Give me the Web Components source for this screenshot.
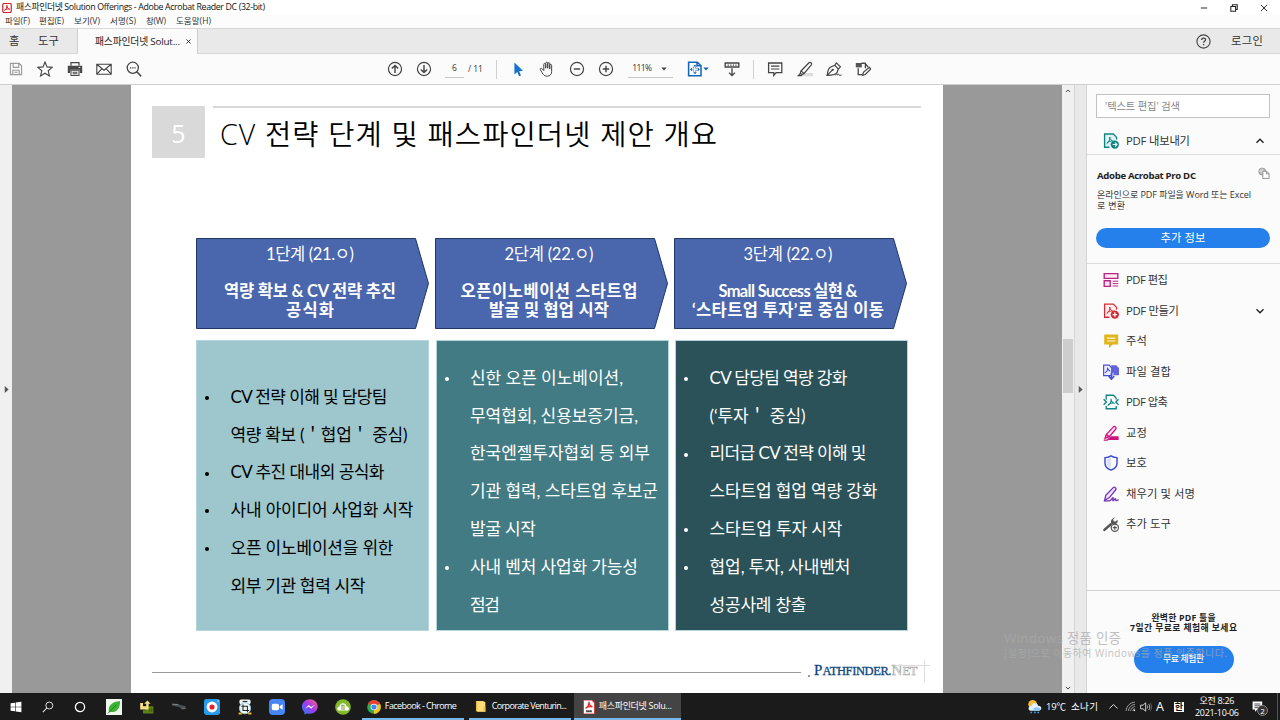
<!DOCTYPE html>
<html lang="ko">
<head>
<meta charset="utf-8">
<title>Adobe Acrobat Reader DC</title>
<style>
  html, body {
    margin: 0;
    width: 1280px;
    height: 720px;
    overflow: hidden;
    background: #fff;
    font-family: "Open Sans", "Noto Sans CJK KR", sans-serif;
  }
</style>
</head>
<body>
<reader-app></reader-app>

<script>
const ICONS = {
  acrobat: `<rect x="1.5" y=".8" width="17" height="18.4" rx="3" fill="#fff" stroke="#d3222a" stroke-width="2.4"/><path d="M5 15c3-1.500 5.300-6.500 5-10.500M9.800 5c.2 3.500 2 6.500 5.700 7.500M5 14c3-2 7-2.500 10.500-1.600" fill="none" stroke="#d3222a" stroke-width="2"/>`,
  save: `<path d="M3 3h11l3 3v11H3zM6.500 3v5h7V3M6 17v-5.500h8V17M8 14h4" fill="none" stroke="#9a9a9a" stroke-width="1.400"/>`,
  star: `<path d="M10 1.300l2.500 6.100 6.500.5-5 4.300 1.600 6.500-5.600-3.500-5.600 3.500L6 12.200 1 7.900l6.500-.5z" fill="none" stroke="#444" stroke-width="1.400"/>`,
  print: `<path d="M5 6V2h10v4" fill="none" stroke="#444" stroke-width="1.500"/><path d="M1 6h18v9h-3v-4H4v4H1z" fill="#484848"/><path d="M5 11.500h10V18H5zM7 14h6M7 16h6" fill="none" stroke="#484848" stroke-width="1.300"/><path d="M14.500 8h2" stroke="#fff" stroke-width="1.200"/>`,
  mail: `<path d="M1 4h18v12.500H1zM1 4l9 7.500L19 4M1 16.500l6.500-7M19 16.500l-6.500-7" fill="none" stroke="#444" stroke-width="1.400"/>`,
  search: `<circle cx="8.500" cy="8.500" r="7" fill="none" stroke="#444" stroke-width="1.600"/><path d="M13.500 13.500l5.500 5.500" stroke="#444" stroke-width="2"/><path d="M5 8.500h1.600M7.700 8.500h1.600M10.400 8.500H12" stroke="#444" stroke-width="1.500"/>`,
  up: `<circle cx="10" cy="10" r="8.200" fill="none" stroke="#444" stroke-width="1.500"/><path d="M10 15V5.500M6 9.500l4-4 4 4" fill="none" stroke="#444" stroke-width="1.800"/>`,
  down: `<circle cx="10" cy="10" r="8.200" fill="none" stroke="#444" stroke-width="1.500"/><path d="M10 5v9.500M6 10.500l4 4 4-4" fill="none" stroke="#444" stroke-width="1.800"/>`,
  cursor: `<path d="M5.500 2v15l3.600-3.300 2.200 5.300 2.400-1-2.200-5.200 4.700-.6z" fill="#1473c8"/>`,
  hand: `<path d="M6 12V4.500c0-2 2.400-2 2.400 0V9 3c0-2 2.500-2 2.500 0v6-5.500c0-2 2.500-2 2.500 0V10 5.500c0-1.800 2.400-1.800 2.400 0V13c0 3.500-2 6-5.500 6-3.300 0-5-1.500-6.300-4.300L1.700 11c-.8-1.700 1.200-2.500 2.200-1.200L6 12" fill="none" stroke="#444" stroke-width="1.250"/>`,
  minus: `<circle cx="10" cy="10" r="8.200" fill="none" stroke="#444" stroke-width="1.500"/><path d="M6 10h8" stroke="#444" stroke-width="1.800"/>`,
  plus: `<circle cx="10" cy="10" r="8.200" fill="none" stroke="#444" stroke-width="1.500"/><path d="M6 10h8M10 6v8" stroke="#444" stroke-width="1.800"/>`,
  fit: `<path d="M2 1.500h11l4.500 4.500v12.500H2zM12.500 1.500V6h5" fill="none" stroke="#1465b8" stroke-width="1.900"/><path d="M10 4.500l2.300 2.500H7.700zM10 16.500l2.300-2.500H7.700zM3.800 10.500l2.500-2.300v4.600zM16 10.500l-2.500-2.300v4.600z" fill="#1465b8"/><path d="M7.500 8.500h5v4h-5z" fill="none" stroke="#1465b8" stroke-dasharray="1.500 1"/>`,
  scroll: `<path d="M1.500 2.500h17v5h-17z" fill="none" stroke="#444" stroke-width="1.700"/><path d="M4.500 5.200h1.500M7.800 5.200h1.500M11 5.200h1.500M14.200 5.200h1.500" stroke="#444" stroke-width="1.500"/><path d="M10 9v9M6.300 14.500L10 18.300l3.700-3.800" fill="none" stroke="#444" stroke-width="1.700"/>`,
  comment: `<path d="M2 2.500h16.500v12h-7l-3 3.500v-3.500H2z" fill="none" stroke="#444" stroke-width="1.600"/><path d="M5 6.500h10.500M5 10h10.500" stroke="#444" stroke-width="1.500"/>`,
  highlight: `<path d="M9 15h11v4H6z" fill="#ddd"/><path d="M5 12.500L15 2.200c1.500-1.500 4.200.8 2.900 2.500L9 15.500zM5 12.500l-1 3 2 1.500 3-1.500M4.500 15.500L1.500 18.300h4l1-1.500" fill="none" stroke="#444" stroke-width="1.500"/>`,
  pen: `<path d="M1.500 18c.3-5 1.500-8.500 4-10.200L11 5.300l4.500 4.800-2 4.800c-1.600 2-5.500 3-12 3.100L8 11.200M11 5.300l2-3 5 5-2.500 2.800" fill="none" stroke="#444" stroke-width="1.500"/><circle cx="8.500" cy="11" r="1.400" fill="#444"/><path d="M12 18c2-3 2.500-2 2.500-.5 1.500-1.500 2-1 2.200.5l2.800-.5" fill="none" stroke="#444" stroke-width="1.200"/>`,
  editdoc: `<path d="M8 3h5v6M4 9v8h5" fill="none" stroke="#444" stroke-width="1.600"/><path d="M1 2.500h7.500v5.500H1z" fill="#555"/><path d="M8 3h4.500l4 4.500" fill="none" stroke="#444" stroke-width="1.600"/><path d="M9.500 18l1-3.800 7.300-6.400 2 2.200-7 6.800z" fill="#fff" stroke="#444" stroke-width="1.500"/>`,
  help: `<circle cx="10" cy="10" r="8.800" fill="none" stroke="#444" stroke-width="1.500"/><path d="M7.500 8c0-3.300 5.200-3.300 5.200-.3 0 2-2.600 2-2.600 4.100M10.100 13.300v1.800" fill="none" stroke="#444" stroke-width="1.800"/>`,
  export: `<path d="M17 8V5.500L13 1.300H2v16.500h6" fill="#dff3f2" stroke="#108684" stroke-width="1.700"/><path d="M4.500 13.500c2.500-1.500 4.500-5 4-8.500.2 3 2 5 5 5.500M5 12c2-1.500 4.500-2 7-2" fill="none" stroke="#108684" stroke-width="1.200"/><circle cx="14.800" cy="14.500" r="5.200" fill="#108684"/><path d="M12 14.500h5M15 12l2.500 2.500L15 17" fill="none" stroke="#fff" stroke-width="1.300"/>`,
  edit: `<path d="M1.500 2h17v6h-17zM1.500 11h7.500v7H1.500z" fill="#fbeaf4" stroke="#bb2083" stroke-width="1.700"/><path d="M12 11.500h7M12 14.500h7M12 17.500h7" stroke="#bb2083" stroke-width="1.200"/>`,
  create: `<path d="M17 8V5.500L13 1.300H2v16.500h6" fill="#fff0ef" stroke="#d22d35" stroke-width="1.600"/><path d="M4.500 13.500c2.500-1.500 4.500-5 4-8.500.2 3 2 5 5 5.500M5 12c2-1.500 4.500-2 7-2" fill="none" stroke="#d22d35" stroke-width="1.200"/><circle cx="14.800" cy="14.500" r="5.200" fill="#d22d35"/><path d="M12 14.500h5.600M14.800 11.700v5.600" stroke="#fff" stroke-width="1.500"/>`,
  note: `<path d="M1.500 2h17.500v12.500H12L7.500 19v-4.500h-6z" fill="#dfb51f"/><path d="M5 6.500h10.500M5 10h10.500" stroke="#fff5cc" stroke-width="1.500"/>`,
  combine: `<path d="M10.500 1.500h6L20 5v9h-7v-3H10z" fill="#6164dc"/><path d="M.8 1.500h7L11 5v9.500H.8z" fill="#eef" stroke="#4a4ed1" stroke-width="1.500"/><path d="M2.500 11c2-1 3.500-4 3-6.500.3 2 1.500 3.500 3.500 4.500" fill="none" stroke="#4a4ed1" stroke-width="1.300"/><path d="M10.500 11v7M7 15l3.500 4 3.500-4" fill="none" stroke="#4a4ed1" stroke-width="2"/>`,
  compress: `<path d="M4 5V1.500h9L16.500 5M4 15v3.500h12.500V15M4 5l-.1 2M16.500 5v2" fill="none" stroke="#108684" stroke-width="1.700"/><path d="M.8 6.500L4.300 10 .8 13.500M19.400 6.500L16 10l3.400 3.500" fill="none" stroke="#108684" stroke-width="1.700"/><path d="M6 14.500c2.500-1.500 4.500-5 4-8.500.2 3 2 5 4.500 6M6 13.500c2-1.500 5-2.500 8-2" fill="none" stroke="#108684" stroke-width="1.300"/>`,
  redact: `<path d="M4 12L13 2.300c1.600-1.500 4.500.8 3 2.700L8 14.500l-5.500 2zM4 12l4 2.500" fill="#fae4f1" stroke="#d0127d" stroke-width="1.600"/><path d="M1 18.800h4.500l3-2.800" fill="none" stroke="#d0127d" stroke-width="1.500"/><path d="M8 16.300l2-2.300h9.500v4.700H7z" fill="#d0127d"/>`,
  shield: `<path d="M10 1c2.500 1.500 5 2.200 7.500 2.300v7c0 4-3 7-7.500 8.700-4.500-1.700-7.500-4.700-7.500-8.700v-7C5 3.200 7.500 2.500 10 1z" fill="#fff" stroke="#3b4bd0" stroke-width="1.800"/><path d="M10 3v14c-3.500-1.500-5.600-3.500-5.600-7V5C6.500 4.800 8.500 4 10 3z" fill="#dce0ff"/>`,
  sign: `<path d="M3.500 11.500L12.800 2c1.700-1.500 4.400.8 3.100 2.700L8 14.500l-6 3.300zM1 18.700h6.500c3 0 4-4.500 5-4.200 1 .2-1 4 .2 4s2-3 2.800-2.800c.8.2-.3 2.500.8 2.700 1 0 1-1.300 3.200-1" fill="#efe4ff" stroke="#7132b8" stroke-width="1.600"/>`,
  tools: `<path d="M1.800 17.300l8-7" stroke="#555" stroke-width="3.200" stroke-linecap="round"/><path d="M15.500 1.500L12.800 4l.5 2.500 2.700.5 2.200-2.200c1 3.700-1.700 6.200-5 5.700C8.500 10 8.500 3.500 15.500 1.500z" fill="#555"/><circle cx="14.800" cy="14.600" r="4.500" fill="#fbfbfb" stroke="#555" stroke-width="1.500"/><path d="M12.300 14.600h5M14.800 12.100v5" stroke="#555" stroke-width="1.500"/>`,
  copy: `<circle cx="7" cy="7.500" r="5.800" fill="#bbb" stroke="#777"/><path d="M1.500 7h10M7 2v10M3 4l8 7" stroke="#eee"/><path d="M8 7h6l4.500 4v8H8zM14 7v4.500h4.500" fill="#fff" stroke="#777" stroke-width="1.300"/>`,
  chevup: `<path d="M3 13.500l7-7 7 7" fill="none" stroke="#222" stroke-width="2.800"/>`,
  chevdown: `<path d="M3 6.500l7 7 7-7" fill="none" stroke="#222" stroke-width="2.800"/>`,
  trayup: `<path d="M1 14.500l9-9 9 9" fill="none" stroke="#eee" stroke-width="2"/>`,
  caret: `<path d="M1 5h18l-9 10z" fill="#444"/>`,
  caretblue: `<path d="M1 5h18l-9 10z" fill="#1465b8"/>`,
  tri: `<path d="M5 0l11 10L5 20z" fill="#555"/>`,
  min: `<path d="M2 10h16" stroke="#222" stroke-width="2.400"/>`,
  restore: `<path d="M2 6h12v12H2zM6 6V2h12v12h-4" fill="none" stroke="#222" stroke-width="2.600"/>`,
  close: `<path d="M2 2l16 16M18 2L2 18" stroke="#222" stroke-width="2.400"/>`,
  closebold: `<path d="M2 2l16 16M18 2L2 18" stroke="#333" stroke-width="4"/>`,
  windows: `<path d="M1 3.800l7.600-1v6.700H1zM9.600 2.600L19 1.300v8.200H9.600zM1 10.500h7.600v6.700l-7.600-1zM9.600 10.500H19v8.200l-9.400-1.300z" fill="#fff"/>`,
  find: `<circle cx="12.200" cy="7.500" r="5.800" fill="none" stroke="#eee" stroke-width="1.500"/><path d="M8 11.700L1.500 18.500" stroke="#eee" stroke-width="1.700"/>`,
  cortana: `<circle cx="10" cy="10" r="7.700" fill="none" stroke="#fff" stroke-width="2.200"/>`,
  leaf: `<path d="M0 0h20v20H0z" fill="#f1f6ee"/><path d="M3.500 16C2.500 7.500 8 3.500 17.500 2.500 18 12 13 18 4.500 16z" fill="#3bb334"/><path d="M2.500 18L13 7" stroke="#237b24" stroke-width="1.200"/>`,
  blocks: `<path d="M8 9h10v9H5v-4h3z" fill="#5d8017"/><path d="M1.500 5h3.500v4h4V6H6.500l4-4 4 4H12v7H1.500z" fill="#f5e083"/><path d="M13.500 12v4M16 12v4" stroke="#2f4607"/>`,
  drone: `<path d="M1 6l9 1 8 2 1 3-4 1-5-3-9-2z" fill="#4b5054"/><path d="M2 6.500l7 .4" stroke="#96999b"/><path d="M13 12h5" stroke="#777"/>`,
  record: `<rect width="20" height="20" rx="3" fill="#299bec"/><circle cx="10" cy="10" r="6.800" fill="#fff"/><circle cx="10" cy="10" r="3.200" fill="#e71d31"/><path d="M17 2.500h1.500" stroke="#fff" stroke-width="1.300"/>`,
  capture: `<rect x="3" y=".5" width="14" height="6" rx="2" fill="#f6f6f6"/><path d="M7 3h6" stroke="#222" stroke-width="1.300"/><circle cx="10" cy="11.500" r="7" fill="#f4fafc" stroke="#8cc4dd" stroke-width="1.200"/><path d="M7.500 7v7.500H15M5.500 9h7.500v7.500" fill="none" stroke="#222" stroke-width="1.300"/><path d="M2 17h4v2.500H2zM14 17h4v2.500h-4z" fill="#efb71b"/>`,
  zoom: `<rect width="20" height="20" rx="5" fill="#4685f3"/><rect x="3.500" y="6" width="9" height="8" rx="2" fill="#fff"/><path d="M13.300 9l3.700-2.500v7L13.300 11z" fill="#fff"/>`,
  messenger: `<defs><linearGradient id="m" x1="0" y1="1" x2="1" y2="0"><stop offset="0" stop-color="#1689ff"/><stop offset=".5" stop-color="#9f38f3"/><stop offset="1" stop-color="#ff6372"/></linearGradient></defs><path d="M10 .3c13 .5 12.700 18.500-.5 18L6 18l-3 1.500v-3.300C-3.500 10 1 .3 10 .3z" fill="url(#m)"/><path d="M4 12l4.500-4.500 3 2.500 4.500-2.700-4.500 5-3-2.500z" fill="#fff"/>`,
  green: `<circle cx="10" cy="10" r="9.800" fill="#82b928"/><path d="M5.500 14.500c-4.500-.5-2.500-5.500 0-5.200 1-5.200 8-5.200 9 0 3.300-.3 4.500 5 0 5.200z" fill="#fff"/><path d="M7.500 12.500h5M7.500 10h5M7.500 7.800h4.500" stroke="#669820" stroke-width="1.200"/>`,
  chrome: `<circle cx="10" cy="10" r="9.700" fill="#32a852"/><path d="M10 10L1.700 5A9.700 9.700 0 0118.500 5.300L10 10z" fill="#e84234"/><path d="M10 10l8.600-4.700c3.100 6-.4 13.900-8.700 14.400z" fill="#fbc116"/><path d="M1.700 5c2-3.300 5.400-4.700 8.300-4.700 4 0 7 2 8.500 5H10z" fill="#e84234"/><circle cx="10" cy="10" r="4.700" fill="#fff"/><circle cx="10" cy="10" r="3.700" fill="#4285f4"/>`,
  folder: `<path d="M3 1.500h11v16H3z" fill="#e9b83e"/><path d="M5 2h10l2.500 2v14H5z" fill="#ffdb7a"/><path d="M14.500 10h3v8h-3z" fill="#f1c24c"/>`,
  pdf: `<path d="M2 0h12l4 4v16H2z" fill="#fff" stroke="#d63839" stroke-width="1.500"/><path d="M5 12c3-1.500 5-5.500 5-9.500 0 4 2 6.500 5 7.200M6 11c2-1 5-1.800 8.500-1.400" fill="none" stroke="#e02626" stroke-width="1.900"/><path d="M6 16h8" stroke="#222" stroke-width="3" stroke-dasharray="2.200 .6"/>`,
  weather: `<circle cx="7.500" cy="7" r="5.800" fill="#f6bd38"/><path d="M5 15.500C.5 15 1.500 9 6 9.500 7 4 14 4 14.800 9c5.500 0 5.500 6 1.200 6.500z" fill="#dff0fb"/><path d="M6 17l-1 2M11 17l-1 2M15.500 17l-1 2" stroke="#4aa2ea" stroke-width="2"/><path d="M8 15.500c0-5 8-6 10-1.500-.5 1-1 1.400-2 1.500z" fill="#8bc8f2"/>`,
  wifi: `<path d="M2 18C3 9 9 3 18 2M6 18c1-6 5-10.500 12-12M10 18c1-4 4-7 8-8M14 18c.5-2 2-3.500 4-4" fill="none" stroke="#bbb" stroke-width="1.500"/><circle cx="17" cy="17" r="1.500" fill="#fff"/>`,
  sound: `<path d="M1 7h4l4.500-4v14L5 13H1z" fill="none" stroke="#eee" stroke-width="1.400"/><path d="M12 7.500c1 1.500 1 3.500 0 5M14.500 5c2.300 3 2.300 7 0 10" fill="none" stroke="#ddd" stroke-width="1.300"/><path d="M17 3c3 4 3 10 0 14" fill="none" stroke="#777" stroke-width="1.200"/>`,
  notice: `<path d="M1 1h16v13H9l-4 4v-4H1z" fill="#fff"/><path d="M4 5h10M4 8h10M4 11h6" stroke="#222" stroke-width="1.300"/>`
};

// base class: every component fills its shadow root from a string once
class Base extends HTMLElement {
  constructor() {
    super();
    this.shadow = this.attachShadow({ mode: 'open' });
  }

  connectedCallback() {
    this.shadow.innerHTML = this.render();
    this.ready();
  }

  ready() {}
}

class AppIcon extends Base {
  render() {
    const size = this.getAttribute('size') || 16;
    return /*html*/`
      <style>
        :host { display: block; flex: none; width: ${size}px; height: ${size}px; }
        svg { display: block; }
      </style>
      <svg width="${size}" height="${size}" viewBox="0 0 20 20">${ICONS[this.getAttribute('name')]}</svg>
    `;
  }
}

// one line of text, tracked so that it takes exactly the given width
class FitText extends Base {
  render() {
    return /*html*/`
      <style>
        :host { display: block; flex: none; width: ${this.getAttribute('w')}px; white-space: nowrap; line-height: 1.2; }
        span { display: block; width: max-content; }
      </style>
      <span><slot></slot></span>
    `;
  }

  ready() {
    const span = this.shadow.querySelector('span');
    const w = Number(this.getAttribute('w'));
    const count = [...this.textContent].length;
    if (count < 2) return;
    span.style.letterSpacing = (w - span.getBoundingClientRect().width) / (count - 1) + 'px';
  }
}

class TitleBar extends Base {
  render() {
    return /*html*/`
      <style>
        :host { display: block; background: #fff; color: #111; }
        .row { display: flex; align-items: center; }
        .title { height: 15px; padding: 0 12px 0 2px; font-size: 8.8px; }
        .title fit-text { margin-left: 4px; }
        .buttons { display: flex; gap: 22px; margin-left: auto; }
        .menu { height: 13px; padding-left: 5px; font-size: 8.5px; background: #fcfcfc; color: #333; }
      </style>
      <div class="row title">
        <app-icon name="acrobat" size="10"></app-icon>
        <fit-text w="249">패스파인더넷 Solution Offerings - Adobe Acrobat Reader DC (32-bit)</fit-text>
        <div class="buttons">
          <app-icon name="min" size="8"></app-icon>
          <app-icon name="restore" size="8"></app-icon>
          <app-icon name="close" size="8"></app-icon>
        </div>
      </div>
      <div class="row menu">
        <fit-text w="25">파일(F)</fit-text>
        <fit-text w="25" style="margin-left:9px">편집(E)</fit-text>
        <fit-text w="26" style="margin-left:10px">보기(V)</fit-text>
        <fit-text w="26" style="margin-left:10px">서명(S)</fit-text>
        <fit-text w="20" style="margin-left:10px">창(W)</fit-text>
        <fit-text w="35" style="margin-left:10px">도움말(H)</fit-text>
      </div>
    `;
  }
}

class TabBar extends Base {
  render() {
    return /*html*/`
      <style>
        :host { display: flex; box-sizing: border-box; height: 26px; align-items: stretch; background: #e9e9e9; border-top: 1px solid #d8d8d8; border-bottom: 1px solid #d8d8d8; color: #333; font-size: 11.3px; }
        .item { display: flex; align-items: center; }
        .home { padding-left: 9px; width: 68px; gap: 19px; }
        .active { box-sizing: border-box; width: 121px; margin-bottom: -1px; padding-left: 17px; gap: 6px; background: #fbfbfb; border: solid #d0d0d0; border-width: 0 1px; font-size: 9.8px; color: #222; }
        .right { margin-left: auto; padding-right: 17px; gap: 20px; }
      </style>
      <div class="item home"><fit-text w="10">홈</fit-text><fit-text w="21">도구</fit-text></div>
      <div class="item active">
        <fit-text w="85">패스파인더넷 Solut...</fit-text>
        <app-icon name="closebold" size="5"></app-icon>
      </div>
      <div class="item right"><app-icon name="help" size="15"></app-icon><fit-text w="32">로그인</fit-text></div>
    `;
  }
}

class ToolBar extends Base {
  render() {
    return /*html*/`
      <style>
        :host { display: flex; box-sizing: border-box; height: 31px; align-items: center; background: #fbfbfb; border-bottom: 1px solid #cfcfcf; padding-left: 8px; font-size: 8.5px; color: #333; }
        .group { display: flex; align-items: center; gap: 13.400px; }
        .nav { margin-left: 245px; }
        .box { display: flex; box-sizing: border-box; height: 18px; align-items: center; border-bottom: 1px solid #c6c6c6; }
        .page { width: 19px; margin-left: 13px; padding-left: 7px; }
        .zoom { width: 45px; margin-left: 14px; padding-left: 4px; gap: 9px; }
        i { width: 1px; height: 19px; background: #d0d0d0; margin: 0 13px; }
      </style>
      <div class="group">
        <app-icon name="save"></app-icon><app-icon name="star"></app-icon><app-icon name="print"></app-icon>
        <app-icon name="mail"></app-icon><app-icon name="search"></app-icon>
      </div>
      <div class="group nav"><app-icon name="up"></app-icon><app-icon name="down"></app-icon></div>
      <div class="box page"><fit-text w="5">6</fit-text></div>
      <fit-text w="15" style="margin-left:4px">/ 11</fit-text>
      <i></i>
      <div class="group">
        <app-icon name="cursor"></app-icon><app-icon name="hand"></app-icon>
        <app-icon name="minus"></app-icon><app-icon name="plus"></app-icon>
      </div>
      <div class="box zoom"><fit-text w="20">111%</fit-text><app-icon name="caret" size="6"></app-icon></div>
      <app-icon name="fit" style="margin-left:14px"></app-icon>
      <app-icon name="caretblue" size="6"></app-icon>
      <app-icon name="scroll" style="margin-left:15px"></app-icon>
      <i></i>
      <div class="group">
        <app-icon name="comment"></app-icon><app-icon name="highlight"></app-icon>
        <app-icon name="pen"></app-icon><app-icon name="editdoc"></app-icon>
      </div>
    `;
  }
}

class StageArrow extends Base {
  render() {
    return /*html*/`
      <style>
        :host { display: grid; width: 233px; height: 91px; color: #fff; font-size: 16.5px; }
        svg, .text { grid-area: 1 / 1; }
        .text { display: flex; flex-direction: column; align-items: center; padding: 7px 5px 0 0; }
        ::slotted(fit-text) { height: 19px; line-height: 19px !important; }
        ::slotted(fit-text:first-child) { margin-bottom: 18px; }
        ::slotted(fit-text:not(:first-child)) { font-weight: 700; }
      </style>
      <svg width="233" height="91"><path d="M.5.500H219.500L232.500 45.500 219.500 90.500H.5z" fill="#4a66ac" stroke="#1f3864"/></svg>
      <div class="text"><slot></slot></div>
    `;
  }
}

class StageCard extends Base {
  render() {
    return /*html*/`
      <style>
        :host { display: flex; box-sizing: border-box; flex-direction: column; justify-content: center; width: 233px; height: 291px; padding: 12px 0 0 8px; border: 1.5px solid #b4d5d9; font-size: 17px; }
        ::slotted(card-line) { height: 37.85px; }
      </style>
      <slot></slot>
    `;
  }
}

class CardLine extends Base {
  render() {
    return /*html*/`
      <style>
        :host { display: flex; align-items: center; }
        .dot { width: 4px; height: 4px; margin: 2px 21.500px 0 0; border-radius: 50%; background: ${this.hasAttribute('dot') ? 'currentColor' : 'none'}; }
      </style>
      <div class="dot"></div>
      <fit-text w="${this.getAttribute('w')}">${this.textContent}</fit-text>
    `;
  }
}

class SlidePage extends Base {
  render() {
    return /*html*/`
      <style>
        :host { display: block; box-sizing: border-box; width: 812px; height: 608px; padding: 21px 22px 0 21px; background: #fff; font-family: Lato, "Noto Sans CJK KR", sans-serif; }
        .head { display: flex; gap: 8px; height: 52px; }
        .num { display: flex; width: 53px; align-items: center; justify-content: center; padding-top: 2px; box-sizing: border-box; background: #d9d9d9; color: #fff; font: 400 25px "Open Sans"; }
        .name { flex: 1; border-top: 2px solid #d9d9d9; padding: 9px 0 0 7px; font: 350 28.5px "Open Sans", "Noto Sans CJK KR"; color: #000; }
        .row { display: flex; gap: 6px; margin-left: 44px; }
        .arrows { margin-top: 80px; }
        .cards { gap: 6.500px; margin-top: 11px; }
        .foot { display: flex; align-items: center; height: 24px; margin-top: 29px; }
        .foot hr { flex: none; width: 649px; height: 1px; margin: 1px 0 0; border: 0; background: #999; }
        .foot b { flex: none; width: 2px; height: 2px; margin: 8px 4px 0 7px; background: #999; }
        .logo { display: flex; align-items: baseline; margin-top: -5px; font: 15px/1 "Liberation Serif"; color: #0d4780; }
        .logo fit-text { -webkit-text-stroke: .3px currentColor; }
        .small { font-size: 12.5px; }
        .logo .net { color: #fff; -webkit-text-stroke: .6px #aaa; }
        .cross { flex: none; align-self: flex-start; margin-left: -22px; }
      </style>
      <div class="head">
        <div class="num">5</div>
        <div class="name"><fit-text w="497">CV 전략 단계 및 패스파인더넷 제안 개요</fit-text></div>
      </div>
      <div class="row arrows">
        <stage-arrow><fit-text w="88">1단계 (21.ㅇ)</fit-text><fit-text w="172">역량 확보 &amp; CV 전략 추진</fit-text><fit-text w="48">공식화</fit-text></stage-arrow>
        <stage-arrow><fit-text w="89">2단계 (22.ㅇ)</fit-text><fit-text w="177">오픈이노베이션 스타트업</fit-text><fit-text w="120">발굴 및 협업 시작</fit-text></stage-arrow>
        <stage-arrow><fit-text w="89">3단계 (22.ㅇ)</fit-text><fit-text w="139">Small Success 실현 &amp;</fit-text><fit-text w="192">‘스타트업 투자’로 중심 이동</fit-text></stage-arrow>
      </div>
      <div class="row cards">
        <stage-card style="background:#9dc6cd;color:#000">
          <card-line dot w="157">CV 전략 이해 및 담당팀</card-line>
          <card-line w="177">역량 확보 (＇협업＇ 중심)</card-line>
          <card-line dot w="154">CV 추진 대내외 공식화</card-line>
          <card-line dot w="183">사내 아이디어 사업화 시작</card-line>
          <card-line dot w="163">오픈 이노베이션을 위한</card-line>
          <card-line w="135">외부 기관 협력 시작</card-line>
        </stage-card>
        <stage-card style="background:#427b84;color:#fff">
          <card-line dot w="153">신한 오픈 이노베이션,</card-line>
          <card-line w="168">무역협회, 신용보증기금,</card-line>
          <card-line w="180">한국엔젤투자협회 등 외부</card-line>
          <card-line w="188">기관 협력, 스타트업 후보군</card-line>
          <card-line w="66">발굴 시작</card-line>
          <card-line dot w="168">사내 벤처 사업화 가능성</card-line>
          <card-line w="30">점검</card-line>
        </stage-card>
        <stage-card style="background:#2b5259;color:#fff">
          <card-line dot w="138">CV 담당팀 역량 강화</card-line>
          <card-line w="96">(‘투자＇ 중심)</card-line>
          <card-line dot w="157">리더급 CV 전략 이해 및</card-line>
          <card-line w="168">스타트업 협업 역량 강화</card-line>
          <card-line dot w="133">스타트업 투자 시작</card-line>
          <card-line dot w="141">협업, 투자, 사내벤처</card-line>
          <card-line w="97">성공사례 창출</card-line>
        </stage-card>
      </div>
      <div class="foot">
        <hr><b></b>
        <div class="logo"><fit-text w="8.5">P</fit-text><fit-text class="small" w="69">ATHFINDER.</fit-text><fit-text class="net" w="11">N</fit-text><fit-text class="net small" w="15">ET</fit-text></div>
        <svg class="cross" width="34" height="24"><path d="M0 5.500h34M28.500 0v22" stroke="#ddd"/></svg>
      </div>
    `;
  }
}

class DocView extends Base {
  render() {
    return /*html*/`
      <style>
        :host { display: flex; width: 1086px; background: #999; }
        .left { display: flex; width: 12px; align-items: center; justify-content: center; background: #f0f0f0; }
        .mid { display: flex; flex: 1; justify-content: center; }
        .bar { display: flex; box-sizing: border-box; width: 12px; flex-direction: column; align-items: center; justify-content: space-between; padding: 3px 0 2px; background: #f0f0f0; }
        .thumb { width: 10px; height: 54px; transform: translateY(-24px); background: #cdcdcd; }
        .strip { display: flex; box-sizing: border-box; width: 12px; align-items: center; justify-content: center; background: #e9e9e9; border-left: 1px solid #d5d5d5; }
      </style>
      <div class="left"><app-icon name="tri" size="7"></app-icon></div>
      <div class="mid"><slide-page></slide-page></div>
      <div class="bar">
        <app-icon name="chevup" size="6"></app-icon>
        <div class="thumb"></div>
        <app-icon name="chevdown" size="6"></app-icon>
      </div>
      <div class="strip"><app-icon name="tri" size="7"></app-icon></div>
    `;
  }
}

class ToolRow extends Base {
  render() {
    const open = this.getAttribute('open');
    return /*html*/`
      <style>
        :host { display: flex; height: 30.5px; align-items: center; padding: 0 15px 0 16px; font-size: 11.3px; color: #333; }
        fit-text { margin-left: 7px; }
        .chev { margin-left: auto; }
      </style>
      <app-icon name="${this.getAttribute('icon')}"></app-icon>
      <fit-text w="${this.getAttribute('w')}">${this.textContent}</fit-text>
      ${open ? `<app-icon class="chev" name="chev${open}" size="10"></app-icon>` : ''}
    `;
  }
}

class SidePanel extends Base {
  render() {
    return /*html*/`
      <style>
        :host { display: flex; box-sizing: border-box; flex-direction: column; width: 194px; background: #fbfbfb; border-left: 1px solid #d3d3d3; color: #333; }
        .search { display: flex; box-sizing: border-box; height: 24px; margin: 9px 10px 0 9px; padding-left: 8px; align-items: center; border: 1px solid #c2c2c2; background: #fff; color: #888; font-size: 10.3px; }
        .export { height: 36px; border-bottom: 1px solid #ddd; }
        .export tool-row { padding-top: 8px; }
        .promo { display: flex; box-sizing: border-box; flex-direction: column; height: 109px; padding: 14px 10px 0 9px; border-bottom: 1px solid #ddd; font-size: 9px; }
        .top { display: flex; align-items: flex-start; justify-content: space-between; height: 20px; font-size: 9.6px; font-weight: 700; color: #222; }
        .top fit-text { margin: 1px 0 0 1px; }
        .promo > fit-text { height: 11px; line-height: 11px; margin-left: 1px; }
        .btn { display: flex; align-items: center; justify-content: center; border-radius: 14px; background: #2680eb; color: #fff; }
        .more { height: 20px; margin-top: 17px; font-size: 11.3px; }
        .list { padding-top: 1px; }
        .trial { display: flex; box-sizing: border-box; flex-direction: column; align-items: center; height: 103px; margin-top: auto; padding-top: 22px; border-top: 1px solid #d3d3d3; font-size: 8.8px; font-weight: 700; color: #222; }
        .trial > fit-text { height: 10px; line-height: 10px; }
        .trial .btn { width: 100px; height: 27px; margin-top: 13px; font-weight: 500; color: #fff; }
      </style>
      <div class="search"><fit-text w="75">'텍스트 편집' 검색</fit-text></div>
      <div class="export"><tool-row icon="export" w="64" open="up">PDF 내보내기</tool-row></div>
      <div class="promo">
        <div class="top"><fit-text w="99">Adobe Acrobat Pro DC</fit-text><app-icon name="copy" size="12" style="margin-top:-2px"></app-icon></div>
        <fit-text w="154">온라인으로 PDF 파일을 Word 또는 Excel</fit-text>
        <fit-text w="28">로 변환</fit-text>
        <div class="btn more"><fit-text w="45">추가 정보</fit-text></div>
      </div>
      <div class="list">
        <tool-row icon="edit" w="42">PDF 편집</tool-row>
        <tool-row icon="create" w="53" open="down">PDF 만들기</tool-row>
        <tool-row icon="note" w="21">주석</tool-row>
        <tool-row icon="combine" w="45">파일 결합</tool-row>
        <tool-row icon="compress" w="42">PDF 압축</tool-row>
        <tool-row icon="redact" w="21">교정</tool-row>
        <tool-row icon="shield" w="21">보호</tool-row>
        <tool-row icon="sign" w="69">채우기 및 서명</tool-row>
        <tool-row icon="tools" w="45">추가 도구</tool-row>
      </div>
      <div class="trial">
        <fit-text w="64">완벽한 PDF 툴을</fit-text>
        <fit-text w="107">7일간 무료로 체험해 보세요</fit-text>
        <div class="btn"><fit-text w="41">무료 체험판</fit-text></div>
      </div>
    `;
  }
}

class TaskBar extends Base {
  render() {
    const pins = ['leaf', 'blocks', 'drone', 'record', 'capture', 'zoom', 'messenger', 'green'];
    return /*html*/`
      <style>
        :host { display: flex; box-sizing: border-box; height: 27px; align-items: center; background: #1b1b1b; color: #fff; font-size: 9px; }
        .sys { display: flex; padding-left: 10px; gap: 20px; }
        .pins { display: flex; margin-left: 20px; gap: 16.700px; }
        .win { display: flex; box-sizing: border-box; height: 27px; align-items: center; padding: 2px 0 0 5px; gap: 4px; border-bottom: 2px solid #76b9ed; }
        .tray { display: flex; margin-left: auto; align-items: center; height: 27px; font-size: 9.500px; }
        .clock { display: flex; flex-direction: column; align-items: center; width: 46px; margin-left: 10px; font-size: 9px; }
        .clock fit-text { height: 12px; line-height: 12px; }
        .ime { display: flex; width: 10px; height: 10px; align-items: center; justify-content: center; margin-left: 9px; background: #fff; color: #111; font-size: 9px; font-weight: 700; line-height: 1; }
        .notice { display: flex; align-items: center; width: 20px; margin-left: 12px; }
        .badge { flex: none; width: 9px; height: 9px; margin: 8px 0 0 -7px; border: 1px solid #888; border-radius: 50%; background: #333; font-size: 8px; line-height: 9px; text-align: center; }
        .edge { width: 1px; height: 27px; margin: 0 2px 0 3px; background: #555; }
      </style>
      <div class="sys">
        <app-icon name="windows" size="12"></app-icon>
        <app-icon name="find" size="12"></app-icon>
        <app-icon name="cortana" size="12"></app-icon>
      </div>
      <div class="pins">${pins.map(n => `<app-icon name="${n}"></app-icon>`).join('')}</div>
      <div class="win" style="width:102px;margin-left:11px"><app-icon name="chrome" size="14"></app-icon><fit-text w="72">Facebook - Chrome</fit-text></div>
      <div class="win" style="width:102px;margin-left:5px;gap:5px"><app-icon name="folder" size="13"></app-icon><fit-text w="75">Corporate Venturin...</fit-text></div>
      <div class="win" style="width:107px;margin-left:3px;padding-left:8px;gap:3px;background:#444"><app-icon name="pdf" size="14"></app-icon><fit-text w="73">패스파인더넷 Solu...</fit-text></div>
      <div class="tray">
        <app-icon name="weather" size="15"></app-icon>
        <fit-text w="20" style="margin-left:4px">19℃</fit-text>
        <fit-text w="27" style="margin-left:5px">소나기</fit-text>
        <app-icon name="trayup" size="9" style="margin-left:11px"></app-icon>
        <app-icon name="wifi" size="11" style="margin-left:7px"></app-icon>
        <app-icon name="sound" size="12" style="margin-left:4px"></app-icon>
        <fit-text w="9" style="margin-left:4px;font-size:12.5px">A</fit-text>
        <div class="ime">한</div>
        <div class="clock"><fit-text w="35">오전 8:26</fit-text><fit-text w="44">2021-10-06</fit-text></div>
        <div class="notice"><app-icon name="notice" size="12"></app-icon><div class="badge">2</div></div>
        <div class="edge" style="margin-left:5px"></div>
      </div>
    `;
  }
}

class ActivateMark extends Base {
  render() {
    return /*html*/`
      <style>
        :host { position: absolute; left: 1004px; top: 630px; color: rgba(170, 170, 170, .72); pointer-events: none; }
        .a { font-size: 13.5px; height: 16px; line-height: 16px; }
        .b { font-size: 10px; height: 14px; line-height: 14px; }
      </style>
      <fit-text class="a" w="117">Windows 정품 인증</fit-text>
      <fit-text class="b" w="223">[설정]으로 이동하여 Windows를 정품 인증합니다.</fit-text>
    `;
  }
}

class ReaderApp extends Base {
  render() {
    return /*html*/`
      <style>
        :host { display: flex; flex-direction: column; width: 1280px; height: 720px; }
        .main { display: flex; height: 608px; }
      </style>
      <title-bar></title-bar>
      <tab-bar></tab-bar>
      <tool-bar></tool-bar>
      <div class="main"><doc-view></doc-view><side-panel></side-panel></div>
      <task-bar></task-bar>
      <activate-mark></activate-mark>
    `;
  }
}

customElements.define('app-icon', AppIcon);
customElements.define('fit-text', FitText);
customElements.define('title-bar', TitleBar);
customElements.define('tab-bar', TabBar);
customElements.define('tool-bar', ToolBar);
customElements.define('stage-arrow', StageArrow);
customElements.define('card-line', CardLine);
customElements.define('stage-card', StageCard);
customElements.define('slide-page', SlidePage);
customElements.define('doc-view', DocView);
customElements.define('tool-row', ToolRow);
customElements.define('side-panel', SidePanel);
customElements.define('task-bar', TaskBar);
customElements.define('activate-mark', ActivateMark);
customElements.define('reader-app', ReaderApp);
</script>
</body>
</html>
